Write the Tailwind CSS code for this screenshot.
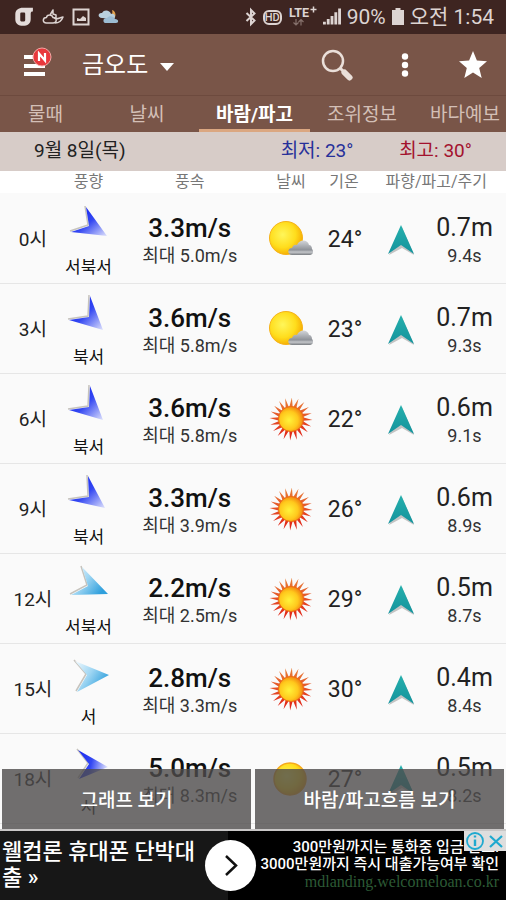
<!DOCTYPE html>
<html lang="ko">
<head>
<meta charset="utf-8">
<meta name="viewport" content="width=device-width, initial-scale=1">
<title>금오도 바람/파고</title>
<script src="https://cdn.jsdelivr.net/npm/@tailwindcss/browser@4"></script>
</head>
<body class="flex h-screen flex-col overflow-hidden bg-[#fafafa] font-[Roboto,'Noto_Sans_CJK_KR',sans-serif] text-[#111]">

<!-- shared drawing definitions -->
<svg class="absolute size-0" aria-hidden="true">
  <defs>
    <linearGradient id="blue" x1="0.2" y1="0.2" x2="1" y2="1"><stop offset="0" stop-color="#1a2af0"/><stop offset=".4" stop-color="#3347f2"/><stop offset="1" stop-color="#dfe2fc"/></linearGradient>
    <linearGradient id="blueFlat" x1="0" y1="0.3" x2="1" y2="0.5"><stop offset="0" stop-color="#1a2af0"/><stop offset=".45" stop-color="#3347f2"/><stop offset="1" stop-color="#dfe2fc"/></linearGradient>
    <linearGradient id="sky" x1="0" y1="0" x2="1" y2="0.6"><stop offset="0" stop-color="#f2fafe"/><stop offset=".5" stop-color="#9fd6f3"/><stop offset="1" stop-color="#2f9fdc"/></linearGradient>
    <radialGradient id="sun" cx=".4" cy=".4" r=".65"><stop offset="0" stop-color="#fff65a"/><stop offset=".6" stop-color="#ffdd1c"/><stop offset="1" stop-color="#f5a800"/></radialGradient>
    <radialGradient id="hot" cx=".42" cy=".55" r=".6"><stop offset="0" stop-color="#fff23a"/><stop offset=".6" stop-color="#ffc81c"/><stop offset="1" stop-color="#f07a10"/></radialGradient>
    <linearGradient id="ray" x1="0" y1="0" x2="0" y2="1"><stop offset="0" stop-color="#e8823a"/><stop offset="1" stop-color="#e01c14"/></linearGradient>
    <linearGradient id="cloud" x1="0" y1="0" x2="0" y2="1"><stop offset="0" stop-color="#d3d6da"/><stop offset=".65" stop-color="#8e9298"/><stop offset=".8" stop-color="#c4c6ca"/><stop offset="1" stop-color="#777b80"/></linearGradient>
    <linearGradient id="teal" x1="0" y1="0" x2="0" y2="1"><stop offset="0" stop-color="#25b0ad"/><stop offset="1" stop-color="#14929c"/></linearGradient>
    <symbol id="cloudy" viewBox="0 0 48 44">
      <circle cx="18" cy="20" r="16.500" fill="url(#sun)" stroke="#f6b21a" stroke-width="1"/>
      <path d="M24 37c-5 0-5-7 0-7 1-3 3-4 5-3 2-6 11-6 12 0 2 0 3 2 3 4 2 2 1 6-2 6z" fill="url(#cloud)"/>
    </symbol>
    <symbol id="sunny" viewBox="0 0 48 44">
      <path id="rays" fill="url(#ray)" d=""/>
      <circle cx="23" cy="21" r="12.500" fill="url(#hot)" stroke="#ee6a12" stroke-width="1"/>
    </symbol>
    <symbol id="disc" viewBox="0 0 48 44"><circle cx="22" cy="21" r="16" fill="url(#sun)" stroke="#f6a81a" stroke-width="1.500"/></symbol>
    <symbol id="wave" viewBox="0 0 32 34">
      <path d="M18 4 30 32 18 25 5 32z" fill="#c4c4c4"/>
      <path d="M17 2 30 31 17 22 4 31z" fill="url(#teal)"/>
    </symbol>
  </defs>
</svg>

<!-- status bar -->
<div class="flex h-[34px] shrink-0 items-center justify-between bg-[#3e2521] px-3 text-[#ddd4d2]">
  <div class="flex items-center gap-2">
    <svg class="h-[22px] w-[22px]" viewBox="0 0 20 20" fill="none" aria-hidden="true"><path d="M19 1.500v3.500c-1.500 0-2 .5-2 2v5c0 4-3 6-7 6s-7-2-7-6V7.500c0-4 3-6 7-6z" fill="#e4dcda"/><rect x="7.500" y="6" width="4.500" height="8" rx="1" fill="#3e2521"/></svg>
    <svg class="h-5 w-[22px]" viewBox="0 0 22 20" fill="none" stroke="currentColor" stroke-width="1.500" stroke-linejoin="round" aria-hidden="true"><path d="M4.500 16c-4.500 0-4-5.500 0-5.500C5 7 10 7 11 10.500c4 0 4.500 5.500 0 5.500zM8 8l3-5v4l3 1v4M12 11c3 2 4 0 9-1-1.500 4-4 6-8 6"/></svg>
    <svg class="h-5 w-[18px]" viewBox="0 0 18 20" fill="none" stroke="currentColor" stroke-width="2" aria-hidden="true"><rect x="1.500" y="2.500" width="15" height="15"/><path d="M5 14v-3l3 1 3-3 3 2v3z" fill="currentColor" stroke="none"/></svg>
    <svg class="h-5 w-[22px]" viewBox="0 0 22 20" aria-hidden="true"><path d="M14 3c4 1 5 7 1 9l-4-2c3-1 4-4 3-7z" fill="#e3a24e"/><path d="M4 11C-1 11 0 5 4 6c2-4 8-3 9 1 4-1 5 3 3 5z" fill="#b9cfdd"/><path d="M8 16c-4 0-3-6 1-5 2-3 7-2 8 1 4 0 4 4 1 4z" fill="#9cbcd3"/></svg>
  </div>
  <div class="flex items-center gap-[6px] text-[21px] leading-8">
    <svg class="h-5 w-3" viewBox="0 0 12 20" fill="none" stroke="currentColor" stroke-width="2" aria-hidden="true"><path d="M1.500 6l8 7.500L6 17V3l3.500 3.500-8 7.500"/></svg>
    <span class="rounded-md border-2 border-current text-[11px] leading-[11px] font-medium">HD</span>
    <svg class="h-[22px] w-[29px]" viewBox="0 0 29 22" role="img" aria-label="LTE+"><text x="1" y="11" font-size="12.500" font-weight="700" fill="currentColor">LTE</text><path d="M22.500 3.500h6M25.500.5v6" stroke="currentColor" stroke-width="1.500"/><path d="M8 13v6M5.500 16.500L8 19l2.500-2.500M13 19.500v-6M10.500 16l2.500-2.500 2.500 2.500" fill="none" stroke="#85706b" stroke-width="1.200"/></svg>
    <svg class="h-5 w-[18px]" viewBox="0 0 19 20" fill="currentColor" aria-hidden="true"><path d="M0 15h3v3H0zM4 12h3v6H4zM8 9h3v9H8zM12 5h3v13h-3zM16 1h3v17h-3z"/></svg>
    <span>90%</span>
    <svg class="h-5 w-3" viewBox="0 0 12 20" fill="currentColor" aria-hidden="true"><path d="M3.500 1h5v2H12v15H0V3h3.500z"/></svg>
    <span>오전 1:54</span>
  </div>
</div>

<!-- app bar -->
<header class="shrink-0 bg-[#795548] text-white">
  <div class="flex h-[62px] items-center border-b border-[#6d4a3e] pr-[17px] pl-5">
    <button aria-label="메뉴" class="relative h-10 w-10">
      <svg class="h-10 w-10" viewBox="0 0 40 40" aria-hidden="true"><path d="M4 10h21v4H4zM4 19h21v4H4zM4 27h21v4H4z" fill="#fff"/><circle cx="22" cy="12" r="9" fill="#e8383c" stroke="#f3a7a4"/><path d="M19 16V8.500l6 7V8" fill="none" stroke="#fff" stroke-width="2.200"/></svg>
    </button>
    <button class="ml-[22px] flex items-center gap-3 text-2xl font-normal">금오도
      <svg class="mt-1 h-2 w-[14px]" viewBox="0 0 14 8" fill="#fff" aria-hidden="true"><path d="M0 0h14L7 8z"/></svg>
    </button>
    <div class="ml-auto flex items-center gap-[38px]">
      <button aria-label="검색"><svg class="size-8" viewBox="0 0 32 32" fill="none" aria-hidden="true"><circle cx="12" cy="12" r="10" stroke="#eadfd9" stroke-width="2.500"/><path d="M19 19l3 3" stroke="#eadfd9" stroke-width="3"/><path d="M23.500 23.500l5 5" stroke="#eadfd9" stroke-width="6" stroke-linecap="round"/></svg></button>
      <button aria-label="더보기"><svg class="h-7 w-7" viewBox="0 0 28 28" fill="#fff" aria-hidden="true"><circle cx="14" cy="5.500" r="3.200"/><circle cx="14" cy="14" r="3.200"/><circle cx="14" cy="22.500" r="3.200"/></svg></button>
      <button aria-label="즐겨찾기"><svg class="size-8" viewBox="0 0 32 32" fill="#fff" aria-hidden="true"><path d="M16 2l3.900 9.500L30 12.300l-7.800 6.600L24.700 29 16 23.500 7.300 29l2.500-10.100L2 12.300l10.100-.8z"/></svg></button>
    </div>
  </div>
  <nav class="grid h-9 grid-cols-[91fr_112fr_107fr_104fr_92fr] pt-[2px] text-[19px] leading-[34px] whitespace-nowrap text-[#d3bfb6]">
    <a href="#tide" class="text-center">물때</a>
    <a href="#weather" class="text-center">날씨</a>
    <a href="#wind" aria-current="page" class="-ml-1 text-center font-bold text-white shadow-[inset_0_-3px_#dba781]">바람/파고</a>
    <a href="#point" class="text-center">조위정보</a>
    <a href="#sea" class="pl-4">바다예보</a>
  </nav>
</header>

<main class="relative min-h-0 flex-1 overflow-hidden">
  <div class="grid h-[39px] grid-cols-[257fr_120fr_129fr] items-center bg-[#d7ccc8] text-[19px] whitespace-nowrap">
    <h2 class="pl-[34px] text-[#222]">9월 8일(목)</h2>
    <span class="text-center text-[#26309a]">최저: 23°</span>
    <span class="pr-3 text-center text-[#a3122e]">최고: 30°</span>
  </div>
  <table class="w-full table-fixed border-collapse text-center whitespace-nowrap">
    <colgroup><col class="w-[13%]"><col class="w-[9%]"><col class="w-[31%]"><col class="w-[9%]"><col class="w-[12%]"><col class="w-[10%]"><col class="w-[16%]"></colgroup>
    <thead class="h-[22px] bg-white text-base leading-[22px] text-[#777]">
      <tr><td></td><th class="p-0 font-normal">풍향</th><th class="p-0 font-normal">풍속</th><th class="p-0 font-normal">날씨</th><th class="p-0 font-normal">기온</th><th colspan="2" class="p-0 pr-2 font-normal">파향/파고/주기</th></tr>
    </thead>
    <tbody id="rows"></tbody>
  </table>
  <div class="absolute inset-x-0 bottom-0 grid h-[62px] grid-cols-2 gap-1 border-b-2 border-[#c9c7c7] px-[2px] text-[19px] font-medium text-white">
    <button class="bg-[#4e4b4b]/80 pt-1">그래프 보기</button>
    <button class="bg-[#4e4b4b]/80 pt-1">바람/파고흐름 보기</button>
  </div>
</main>

<!-- advertisement -->
<aside class="relative flex h-[69px] shrink-0 bg-black text-white">
  <p class="w-[45%] bg-[#171717] pt-2 pl-[2px] text-[22px] leading-[26px] font-medium"><span class="block w-[200px]">웰컴론 휴대폰 단박대출 »</span></p>
  <div class="flex flex-1 flex-col items-end pt-2 pr-[7px] text-[15px] leading-[17px] font-medium whitespace-nowrap">
    <p>300만원까지는 통화중 입금 완료!</p><p>3000만원까지 즉시 대출가능여부 확인</p><p class="font-['Liberation_Serif',serif] text-base leading-[17px] font-normal text-[#2c5a35]">mdlanding.welcomeloan.co.kr</p>
  </div>
  <button aria-label="열기" class="absolute top-[9px] left-[205px] size-[51px] rounded-full bg-white"><svg class="size-full" viewBox="0 0 51 51" fill="none" stroke="#111" stroke-width="2.500" aria-hidden="true"><path d="M21 16l10 9.500L21 35"/></svg></button>
  <div class="absolute top-0 right-0 flex h-5 bg-[#dedede]">
    <button aria-label="광고 정보"><svg class="h-5 w-[22px]" viewBox="0 0 22 20" fill="none" stroke="#1fa9cf" stroke-width="1.800" aria-hidden="true"><circle cx="11" cy="10" r="8"/><path d="M11 8.500V15M11 4.500v2" stroke-width="2.400"/></svg></button>
    <button aria-label="광고 닫기"><svg class="h-5 w-5" viewBox="0 0 20 20" fill="none" stroke="#1fa9cf" stroke-width="2.200" aria-hidden="true"><path d="M4 5l12 11M16 5L4 16"/></svg></button>
  </div>
</aside>

<script>
  // Sun rays: 20 thin triangles round the disc
  let rays = '';
  for (let i = 0; i < 20; i++) {
    const a = i * Math.PI / 10, p = (r, t) => (23 + r * Math.cos(t)).toFixed(1) + ' ' + (21 + r * Math.sin(t)).toFixed(1);
    rays += 'M' + p(12, a - .14) + 'L' + p(21.5, a + .04) + 'L' + p(12, a + .14) + 'z';
  }
  document.getElementById('rays').setAttribute('d', rays);

  // Arrow outline: tip, first wing, notch, second wing
  const arrows = {
    wnw: { fill: 'blue', pts: [[42,35],[21,6],[24,25],[6,31]] },
    nw: { fill: 'blue', pts: [[38,39],[25,5],[24,26],[4,29]] },
    nwWide: { fill: 'blue', pts: [[40,37],[23,5],[24,26],[4,29]] },
    wnwLight: { fill: 'sky', pts: [[43,33],[17,6],[23,25],[6,34]] },
    wLight: { fill: 'sky', pts: [[44,24],[10,10],[22,24],[12,41]] },
    w: { fill: 'blueFlat', pts: [[43,26],[13,9],[24,23],[14,38]] }
  };
  const data = [
    ['0시','wnw','서북서','3.3','5.0','cloudy','24','0.7','9.4'],
    ['3시','nw','북서','3.6','5.8','cloudy','23','0.7','9.3'],
    ['6시','nw','북서','3.6','5.8','sunny','22','0.6','9.1'],
    ['9시','nwWide','북서','3.3','3.9','sunny','26','0.6','8.9'],
    ['12시','wnwLight','서북서','2.2','2.5','sunny','29','0.5','8.7'],
    ['15시','wLight','서','2.8','3.3','sunny','30','0.4','8.4'],
    ['18시','w','서','5.0','8.3','disc','27','0.5','8.2']
  ];
  document.getElementById('rows').innerHTML = data.map(([time, dir, name, speed, gust, sky, temp, height, period]) => {
    const { fill, pts } = arrows[dir];
    const edge = pts.slice(1).map(([x, y]) => [x - 1, y - 1]);
    return `<tr class="h-[90px] border-b border-[#e6e6e6]">
      <th class="p-0 pt-1 text-[19px] font-normal text-[#222]">${time}</th>
      <td class="p-0 pt-1"><div class="flex flex-col items-center gap-[10px]">
        <svg class="h-11 w-12 shrink-0" viewBox="0 0 48 44" aria-hidden="true"><polyline points="${edge.join(' ')}" fill="none" stroke="#c6c3bd" stroke-width="1.500"/><polygon points="${pts.join(' ')}" fill="url(#${fill})"/></svg>
        <span class="text-[17px] leading-6">${name}</span></div></td>
      <td class="p-0 pt-1"><p class="text-[26px] leading-8 font-medium">${speed}m/s</p><p class="text-lg leading-6 text-[#333]">최대 ${gust}m/s</p></td>
      <td class="p-0 pt-1"><svg class="mx-auto h-11 w-12" aria-hidden="true"><use href="#${sky}"/></svg></td>
      <td class="p-0 pt-1 pl-[2px] text-[23px] text-[#222]">${temp}°</td>
      <td class="p-0 pt-1"><svg class="mx-auto h-[34px] w-8" aria-hidden="true"><use href="#wave"/></svg></td>
      <td class="p-0 pt-1 pr-[2px]"><p class="text-[25px] leading-8 text-[#222]">${height}m</p><p class="text-lg leading-6 text-[#333]">${period}s</p></td>
    </tr>`;
  }).join('');
</script>
</body>
</html>
